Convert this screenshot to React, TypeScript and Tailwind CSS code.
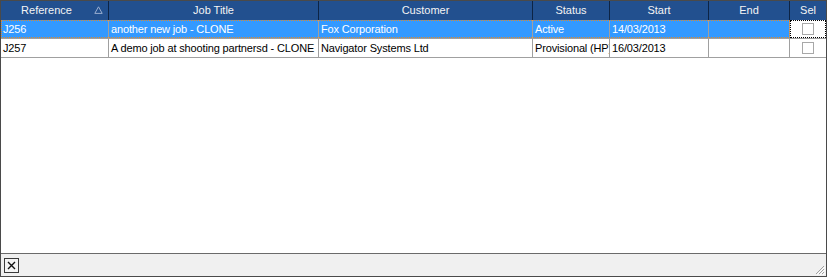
import React from 'react';

const COLS = [
  { key: 'ref', label: 'Reference', w: 'w-[108px]' },
  { key: 'title', label: 'Job Title', w: 'w-[210px]' },
  { key: 'cust', label: 'Customer', w: 'w-[214px]' },
  { key: 'status', label: 'Status', w: 'w-[77px]' },
  { key: 'start', label: 'Start', w: 'w-[99px]' },
  { key: 'end', label: 'End', w: 'w-[81px]' },
];

const ROWS = [
  { ref: 'J256', title: 'another new job - CLONE', cust: 'Fox Corporation', status: 'Active', start: '14/03/2013', end: '' },
  { ref: 'J257', title: 'A demo job at shooting partnersd - CLONE', cust: 'Navigator Systems Ltd', status: 'Provisional (HP)', start: '16/03/2013', end: '' },
];

const Checkbox = () => <div className="w-[12px] h-[12px] border border-[#a8a8a8] bg-white" />;

export default function App() {
  return (
    <div className="w-[827px] h-[277px] border border-[#4a4a4a] bg-white flex flex-col font-['Liberation_Sans',Arial,sans-serif] text-[11px] overflow-hidden">
      {/* Header */}
      <div className="flex h-[19px] bg-[#22508f] text-[#f4f4f4] shrink-0">
        {COLS.map((c, i) => (
          <div
            key={c.key}
            className={`${c.w} shrink-0 border-r border-[#0d2445] leading-[19px] text-center relative ${i === 0 ? 'pr-[16px]' : ''}`}
          >
            {c.label}
            {i === 0 && (
              <svg className="absolute right-[5px] top-[5px]" width="9" height="8" viewBox="0 0 9 8">
                <path d="M4.5 0.8 L8.2 7.4 L0.8 7.4 Z" fill="none" stroke="#9aaed0" strokeWidth="1" />
              </svg>
            )}
          </div>
        ))}
        <div className="flex-1 leading-[19px] text-center">Sel</div>
      </div>

      {/* Rows */}
      {ROWS.map((r, ri) => {
        const sel = ri === 0;
        return (
          <div key={r.ref} className="flex h-[19px] shrink-0 border-b border-[#a0a0a0] tracking-[-0.15px]">
            <div
              className={`flex ${sel ? 'bg-[#3399ff] text-white outline-1 outline-dotted outline-[#e08a2c] -outline-offset-1' : 'text-black'}`}
            >
              {COLS.map((c) => (
                <div
                  key={c.key}
                  className={`${c.w} shrink-0 border-r border-[#a0a0a0] leading-[19px] pl-[2px] whitespace-nowrap overflow-hidden text-left`}
                >
                  {(r as any)[c.key]}
                </div>
              ))}
            </div>
            <div
              className={`flex-1 flex items-center justify-center ${sel ? 'outline-1 outline-dotted outline-black -outline-offset-1' : ''}`}
            >
              <Checkbox />
            </div>
          </div>
        );
      })}

      <div className="flex-1" />

      {/* Footer */}
      <div className="h-[23px] shrink-0 border-t border-[#6a6a6a] bg-[#f0f0f0] flex items-center justify-between pl-[3px] pr-[1px]">
        <div className="w-[15px] h-[15px] border border-[#3a3a3a] bg-[#f4f4f4] flex items-center justify-center">
          <svg width="9" height="9" viewBox="0 0 9 9">
            <path d="M1 1 L8 8 M8 1 L1 8" stroke="#111" strokeWidth="1.4" />
          </svg>
        </div>
        <svg className="self-end mb-[1px]" width="12" height="12" viewBox="0 0 12 12">
          <path d="M11 3 L3 11 M11 6 L6 11 M11 9 L9 11" stroke="#a0a0a0" strokeWidth="1" />
          <path d="M12 4 L4 12 M12 7 L7 12 M12 10 L10 12" stroke="#ffffff" strokeWidth="1" />
        </svg>
      </div>
    </div>
  );
}
